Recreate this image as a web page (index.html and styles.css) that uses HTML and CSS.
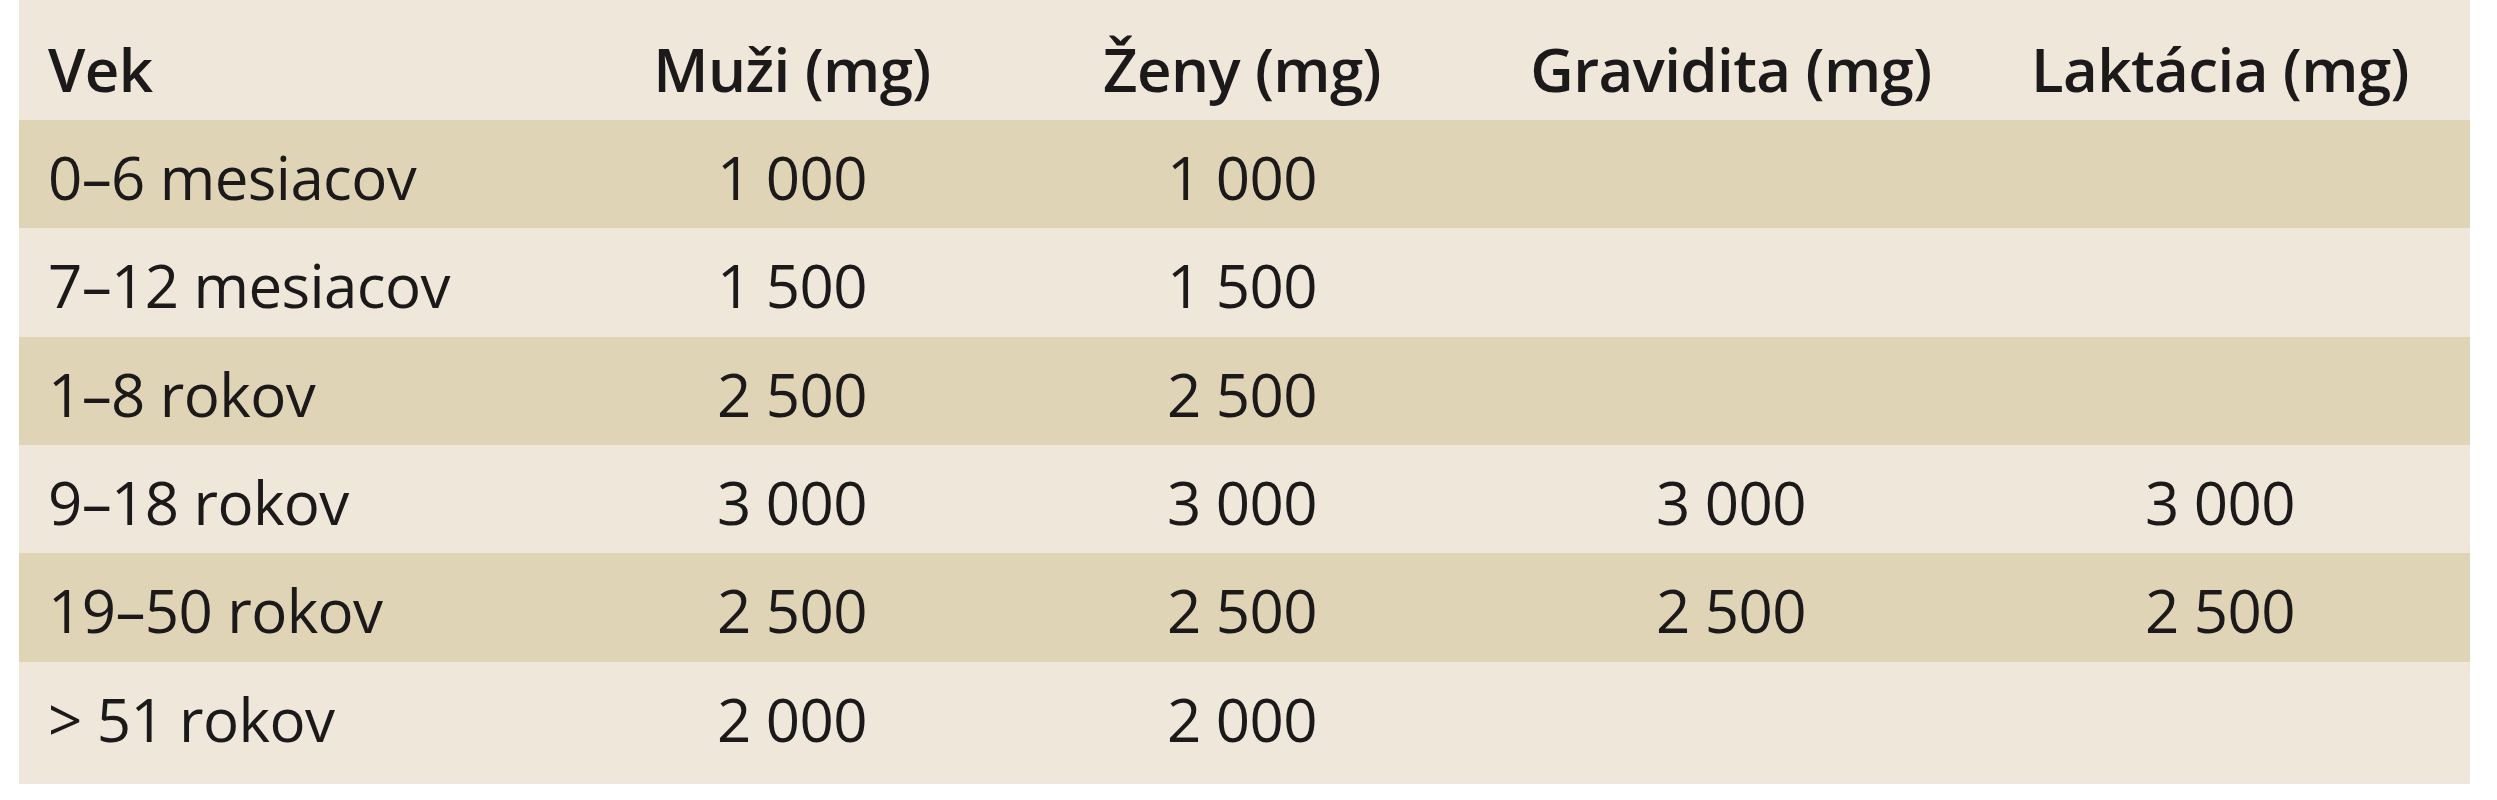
FILE: index.html
```html
<!DOCTYPE html>
<html lang="sk">
<head>
<meta charset="utf-8">
<title>Tabuľka</title>
<link rel="stylesheet" href="styles.css">
</head>
<body>
<table class="data">
  <colgroup>
    <col class="c-age">
    <col class="c-num">
    <col class="c-num">
    <col class="c-grav">
    <col class="c-lakt">
  </colgroup>
  <thead>
    <tr>
      <th class="age">Vek</th>
      <th>Muži (mg)</th>
      <th>Ženy (mg)</th>
      <th>Gravidita (mg)</th>
      <th class="last">Laktácia (mg)</th>
    </tr>
  </thead>
  <tbody>
    <tr class="dark">
      <td class="age">0–6 mesiacov</td><td>1 000</td><td>1 000</td><td></td><td class="last"></td>
    </tr>
    <tr class="light">
      <td class="age">7–12 mesiacov</td><td>1 500</td><td>1 500</td><td></td><td class="last"></td>
    </tr>
    <tr class="dark">
      <td class="age">1–8 rokov</td><td>2 500</td><td>2 500</td><td></td><td class="last"></td>
    </tr>
    <tr class="light">
      <td class="age">9–18 rokov</td><td>3 000</td><td>3 000</td><td>3 000</td><td class="last">3 000</td>
    </tr>
    <tr class="dark">
      <td class="age">19–50 rokov</td><td>2 500</td><td>2 500</td><td>2 500</td><td class="last">2 500</td>
    </tr>
    <tr class="light end">
      <td class="age">&gt; 51 rokov</td><td>2 000</td><td>2 000</td><td></td><td class="last"></td>
    </tr>
  </tbody>
</table>
</body>
</html>
```

FILE: styles.css
```css
html, body {
  margin: 0;
  padding: 0;
  background: #ffffff;
}

body {
  font-family: "Open Sans", "Noto Sans", "DejaVu Sans", sans-serif;
  color: #1c191a;
}

.data {
  margin-left: 19px;
  width: 2451px;
  table-layout: fixed;
  border-collapse: collapse;
  border-spacing: 0;
  background: #eee7da;
  font-size: 60px;
  letter-spacing: -0.6px;
}

.c-age { width: 548px; }
.c-num { width: 450px; }
.c-grav { width: 528px; }
.c-lakt { width: 475px; }

.data th,
.data td {
  padding: 16px 0 10.33px 0;
  line-height: 82px;
  text-align: center;
  white-space: nowrap;
  vertical-align: top;
}

.data th {
  font-weight: 600;
  padding-top: 28px;
  padding-bottom: 10px;
}

.data .age {
  text-align: left;
  padding-left: 29px;
}

.data .last {
  padding-right: 25px;
}

.data td {
  font-weight: 500;
}

.dark {
  background: #dfd4b5;
}

.light {
  background: #eee7da;
}

.end td {
  padding-bottom: 24px;
}
```
